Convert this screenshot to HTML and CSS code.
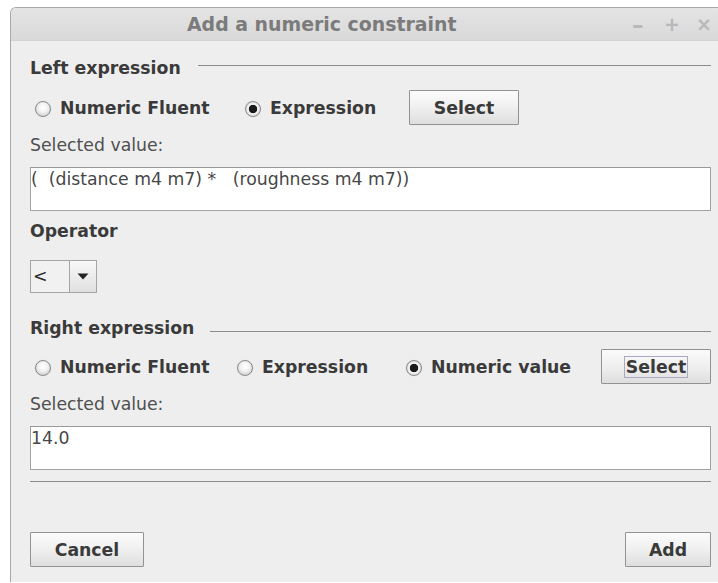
FILE: index.html
```html
<!DOCTYPE html>
<html>
<head>
<meta charset="utf-8">
<title>Add a numeric constraint</title>
<link rel="stylesheet" href="styles.css">
</head>
<body>
<div class="window">
  <div class="titlebar">
    <span class="title">Add a numeric constraint</span>
    <span class="controls">
      <span class="ctl ctl-min">&#8211;</span>
      <span class="ctl">+</span>
      <span class="ctl">&#215;</span>
    </span>
  </div>
  <div class="content">
    <div class="group-head head-left"><span class="group-title">Left expression</span><span class="rule"></span></div>

    <div class="radio-row row-left">
      <label class="radio r-fluent"><span class="dot"></span>Numeric Fluent</label>
      <label class="radio r-expr1 checked"><span class="dot"></span>Expression</label>
      <button class="btn btn-select">Select</button>
    </div>

    <div class="field-label">Selected value:</div>
    <div class="textbox">(&nbsp; (distance m4 m7) * &nbsp; (roughness m4 m7))</div>

    <div class="section-label">Operator</div>
    <div class="combo">
      <span class="combo-value">&lt;</span>
      <span class="combo-arrow"><svg width="12" height="7" viewBox="0 0 12 7"><path d="M0.5 0.5 L11.5 0.5 L6 6.5 Z" fill="#222"/></svg></span>
    </div>

    <div class="group-head head-right"><span class="group-title">Right expression</span><span class="rule"></span></div>

    <div class="radio-row row-right">
      <label class="radio r-fluent2"><span class="dot"></span>Numeric Fluent</label>
      <label class="radio r-expr2"><span class="dot"></span>Expression</label>
      <label class="radio r-value checked"><span class="dot"></span>Numeric value</label>
      <button class="btn btn-select"><span class="focus">Select</span></button>
    </div>

    <div class="field-label">Selected value:</div>
    <div class="textbox">14.0</div>

    <div class="separator"></div>

    <div class="actions">
      <button class="btn btn-cancel">Cancel</button>
      <button class="btn btn-add">Add</button>
    </div>
  </div>
</div>
</body>
</html>
```

FILE: styles.css
```css
html, body {
  margin: 0;
  padding: 0;
  background: #ffffff;
  overflow: hidden;
  width: 718px;
  height: 583px;
}

body {
  font-family: "DejaVu Sans", "Liberation Sans", sans-serif;
  font-size: 17.3px;
  color: #3a3a3a;
}

.window {
  margin: 7px 0 0 10px;
  width: 730px;
  height: 574px;
  background: #eeeeee;
  border: 1px solid #a9a9a9;
  border-right: none;
  border-bottom: none;
  border-radius: 6px 0 0 0;
  overflow: hidden;
}

.titlebar {
  height: 33px;
  display: flex;
  align-items: center;
  background: linear-gradient(#e4e4e4, #d9d9d9);
  border-bottom: 1px solid #d2d2d2;
  box-sizing: border-box;
}

.title {
  font-weight: bold;
  font-size: 18.9px;
  color: #7b7b7b;
  margin-left: 176px;
  white-space: nowrap;
  width: 445px;
}

.controls {
  display: flex;
  align-items: center;
  color: #b9b9b9;
  font-weight: bold;
  font-size: 19px;
}

.ctl {
  width: 32px;
  text-align: left;
}

.ctl-min {
  font-size: 23px;
  margin-top: 1px;
}

.content {
  padding-left: 19px;
  width: 681px;
}

.group-head {
  display: flex;
  align-items: flex-start;
  height: 20px;
  line-height: 20px;
}

.group-title {
  font-weight: bold;
  white-space: nowrap;
}

.rule {
  flex: 1;
  height: 1px;
  background: #8c8c8c;
}

.head-left {
  margin-top: 17px;
}
.head-left .rule {
  margin: 7px 0 0 17px;
}

.head-right {
  margin-top: 25px;
}
.head-right .rule {
  margin: 13px 0 0 16px;
}

.radio-row {
  display: flex;
  align-items: center;
  height: 35px;
}

.row-left { margin-top: 12px; }
.row-right { margin-top: 11px; }

.radio {
  display: flex;
  align-items: center;
  font-weight: bold;
  white-space: nowrap;
  flex: none;
}

.dot {
  width: 14px;
  height: 14px;
  border-radius: 50%;
  border: 1px solid #8a8a8a;
  background: radial-gradient(circle at 50% 40%, #ffffff 0%, #f4f4f4 38%, #c2c2c2 100%);
  box-shadow: 0 0 1px rgba(0, 0, 0, 0.15);
  margin-right: 9px;
  flex: none;
  position: relative;
  top: 1px;
}

.radio.checked .dot {
  background: radial-gradient(circle, #1a1a1a 0, #1a1a1a 3.8px, #fafafa 4.6px, #eeeeee 5.4px, #bdbdbd 100%);
}

.r-fluent { margin-left: 5px; width: 210px; }
.r-expr1 { width: 164px; }

.r-fluent2 { margin-left: 5px; width: 202px; }
.r-expr2 { width: 169px; }
.r-value { width: 195px; }

.btn-select { width: 110px; }

.btn {
  height: 35px;
  box-sizing: border-box;
  border: 1px solid #929292;
  border-radius: 1px;
  background: linear-gradient(#fbfbfb 0%, #f1f1f1 45%, #dedede 100%);
  font-family: "DejaVu Sans", "Liberation Sans", sans-serif;
  font-size: 17.3px;
  font-weight: bold;
  color: #3a3a3a;
  padding: 0;
  display: flex;
  align-items: center;
  justify-content: center;
  flex: none;
}

.focus {
  border: 1px solid #a9a9c4;
  padding: 0 1px;
  line-height: 20px;
}

.field-label {
  margin-top: 10px;
  height: 20px;
  line-height: 20px;
  color: #4f4f4f;
}

.textbox {
  margin-top: 12px;
  height: 44px;
  box-sizing: border-box;
  background: #ffffff;
  border: 1px solid #a3a3a3;
  border-top-color: #999999;
  padding: 1px 0 0 0;
  line-height: 20px;
  color: #474747;
  white-space: nowrap;
}

.section-label {
  margin-top: 10px;
  height: 20px;
  line-height: 20px;
  font-weight: bold;
}

.combo {
  margin-top: 19px;
  width: 67px;
  height: 33px;
  box-sizing: border-box;
  border: 1px solid #a5a5a5;
  display: flex;
}

.combo-value {
  width: 39px;
  border-right: 1px solid #a5a5a5;
  background: #f1f1f1;
  line-height: 31px;
  padding-left: 2px;
  box-sizing: border-box;
  color: #2a2a2a;
}

.combo-arrow {
  flex: 1;
  display: flex;
  align-items: center;
  justify-content: center;
  background: linear-gradient(#f8f8f8, #e0e0e0);
}

.separator {
  margin-top: 11px;
  height: 1px;
  background: #8c8c8c;
}

.actions {
  margin-top: 50px;
  display: flex;
  justify-content: space-between;
}

.btn-cancel { width: 114px; }
.btn-add { width: 86px; }
```
